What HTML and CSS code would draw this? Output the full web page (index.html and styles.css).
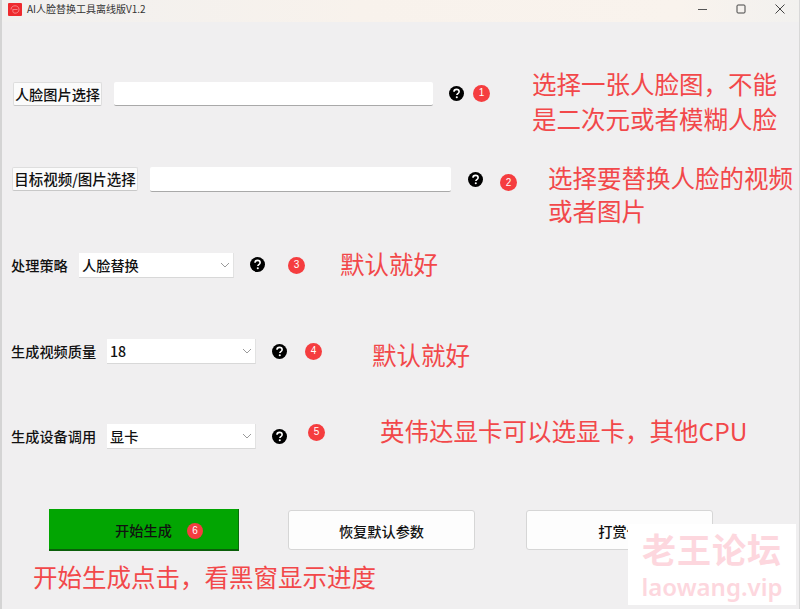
FILE: index.html
```html
<!DOCTYPE html>
<html lang="zh">
<head>
<meta charset="utf-8">
<title>AI人脸替换工具离线版V1.2</title>
<link rel="stylesheet" href="styles.css">
</head>
<body>
<svg class="defs" width="0" height="0" aria-hidden="true">
  <symbol id="help" viewBox="0 0 16 16">
    <circle cx="8" cy="8" r="8" fill="#000"/>
    <path d="M5.3 6.2C5.3 4.6 6.5 3.6 8 3.6s2.8 1 2.8 2.4c0 1.1-.7 1.6-1.4 2.1-.7.5-1 .8-1 1.6" fill="none" stroke="#fff" stroke-width="1.7"/>
    <circle cx="8.3" cy="12" r="1.1" fill="#fff"/>
  </symbol>
  <symbol id="chev" viewBox="0 0 10 6">
    <path d="M1 1l4 4 4-4" fill="none" stroke="#9a9a9a" stroke-width="1"/>
  </symbol>
</svg>
<div class="window">
  <header class="titlebar">
    <svg class="logo" viewBox="0 0 14 13">
      <rect width="14" height="13" rx="1" fill="#ee2a2e"/>
      <path d="M3 6.5C3 4 5 2.800 7 2.800S11 4 11 6.500 9 10.200 7 10.200 4.500 8.500 5 7" fill="none" stroke="#f9a8ac" stroke-width=".7"/>
      <path d="M4.500 6.500h5" stroke="#f9a8ac" stroke-width=".7"/>
    </svg>
    <span class="title">AI人脸替换工具离线版V1.2</span>
    <div class="controls">
      <svg class="ctl ctl-min" viewBox="0 0 10 10"><path d="M0 5.500h9" stroke="#555" stroke-width="1"/></svg>
      <svg class="ctl ctl-max" viewBox="0 0 10 10"><rect x="1" y="1" width="8" height="8" rx="1" fill="none" stroke="#444" stroke-width="1"/></svg>
      <svg class="ctl ctl-close" viewBox="0 0 10 10"><path d="M.5.5l9 9M9.500.5l-9 9" stroke="#444" stroke-width="1"/></svg>
    </div>
  </header>

  <main class="form">
    <section class="row row-1">
      <button class="pick pick-1">人脸图片选择</button>
      <div class="input input-1"></div>
      <svg class="help help-1"><use href="#help"/></svg>
      <span class="badge badge-1">1</span>
      <p class="note note-1">选择一张人脸图，不能<br>是二次元或者模糊人脸</p>
    </section>

    <section class="row row-2">
      <button class="pick pick-2">目标视频/图片选择</button>
      <div class="input input-2"></div>
      <svg class="help help-2"><use href="#help"/></svg>
      <span class="badge badge-2">2</span>
      <p class="note note-2">选择要替换人脸的视频<br>或者图片</p>
    </section>

    <section class="row row-3">
      <label class="label label-3">处理策略</label>
      <div class="select select-3"><span>人脸替换</span><svg class="chev"><use href="#chev"/></svg></div>
      <svg class="help help-3"><use href="#help"/></svg>
      <span class="badge badge-3">3</span>
      <p class="note note-3">默认就好</p>
    </section>

    <section class="row row-4">
      <label class="label label-4">生成视频质量</label>
      <div class="select select-4"><span>18</span><svg class="chev"><use href="#chev"/></svg></div>
      <svg class="help help-4"><use href="#help"/></svg>
      <span class="badge badge-4">4</span>
      <p class="note note-4">默认就好</p>
    </section>

    <section class="row row-5">
      <label class="label label-4">生成设备调用</label>
      <div class="select select-4"><span>显卡</span><svg class="chev"><use href="#chev"/></svg></div>
      <svg class="help help-4"><use href="#help"/></svg>
      <span class="badge badge-5">5</span>
      <p class="note note-5">英伟达显卡可以选显卡，其他CPU</p>
    </section>

    <section class="actions">
      <button class="action action-start">开始生成<span class="badge badge-6">6</span></button>
      <button class="action action-reset">恢复默认参数</button>
      <button class="action action-tip">打赏作</button>
    </section>
    <p class="note note-6">开始生成点击，看黑窗显示进度</p>
  </main>

  <aside class="watermark">
    <span class="wm-cn">老王论坛</span>
    <span class="wm-en">laowang.vip</span>
  </aside>
</div>
</body>
</html>
```

FILE: styles.css
```css
* { box-sizing: border-box; }
html, body { margin: 0; padding: 0; }
body {
  width: 800px;
  height: 609px;
  overflow: hidden;
  background: #f0eff0;
  font-family: "Noto Sans CJK SC", "Liberation Sans", sans-serif;
}
.defs { position: absolute; }
.window {
  position: relative;
  width: 800px;
  height: 609px;
  border-left: 2px solid #d4d4d4;
  border-right: 1px solid #d8d8d8;
}
.titlebar {
  display: flex;
  align-items: center;
  height: 22px;
  padding-left: 6px;
  background: linear-gradient(90deg, #f1f0ef 0, #f8f2ec 45%, #f9f3ed 85%, #f2f1ef 100%);
}
.logo { width: 14px; height: 13px; margin-top: -4px; }
.title {
  margin-left: 5px;
  margin-top: -4px;
  font-size: 10px;
  line-height: 14px;
  color: #333;
}
.controls { display: flex; align-items: center; margin-left: auto; margin-top: -5px; }
.ctl { width: 10px; height: 10px; }
.ctl-min { margin-right: 28px; }
.ctl-max { margin-right: 29px; }
.ctl-close { margin-right: 14px; }

.form { display: flex; flex-direction: column; }
.row { display: flex; align-items: center; height: 24px; }
.row-1 { margin-top: 60px; padding-left: 11px; }
.row-2 { margin-top: 61px; padding-left: 10px; }
.row-3 { margin-top: 62px; padding-left: 9px; }
.row-4 { margin-top: 62px; padding-left: 9px; }
.row-5 { margin-top: 61px; padding-left: 9px; }

.pick {
  height: 24px;
  padding: 0;
  border: 1px solid #dedede;
  border-bottom-color: #c8c8c8;
  border-radius: 2px;
  background: #fbfbfb;
  color: #111;
  font: 500 14.200px/22px "Noto Sans CJK SC", sans-serif;
  white-space: nowrap;
}
.pick-1 { width: 89px; }
.pick-2 { width: 126px; font-size: 14.500px; }

.input {
  height: 24px;
  background: #fff;
  border-bottom: 1px solid #a9a9a9;
  border-radius: 2px;
}
.input-1 { width: 319px; margin-left: 12px; }
.input-2 { width: 301px; margin-left: 12px; height: 25px; }

.help { width: 15px; height: 15px; flex: none; }
.help-1 { margin-left: 16px; margin-top: -2px; }
.help-2 { margin-left: 17px; margin-top: 0; }
.help-3 { margin-left: 16px; margin-top: -2px; }
.help-4 { margin-left: 16px; }

.badge {
  display: inline-flex;
  align-items: center;
  justify-content: center;
  flex: none;
  width: 17px;
  height: 17px;
  border-radius: 50%;
  background: #f53d3f;
  color: #fff;
  font: 10px/1 "Liberation Sans", sans-serif;
}
.badge-1 { margin-left: 9px; margin-top: -2px; }
.badge-2 { margin-left: 17px; margin-top: 7px; }
.badge-3 { margin-left: 23px; }
.badge-4 { margin-left: 18px; }
.badge-5 { margin-left: 21px; margin-top: -8px; }
.badge-6 {
  position: absolute;
  left: 138px;
  top: 14px;
  width: 16px;
  height: 16px;
}

.note {
  margin: 0;
  color: #f2484a;
  font-size: 24.500px;
  line-height: 32px;
  white-space: nowrap;
}
.note-1 { margin-left: 42px; margin-top: 13px; line-height: 35px; }
.note-2 { margin-left: 31px; margin-top: 30px; line-height: 33px; }
.note-3 { margin-left: 35px; margin-top: -2px; }
.note-4 { margin-left: 50px; margin-top: 8px; }
.note-5 { margin-left: 55px; margin-top: -10px; }
.note-6 { margin: 10px 0 0 31px; }

.label {
  color: #111;
  font-size: 14.200px;
  font-weight: 500;
  line-height: 24px;
  white-space: nowrap;
}
.label-3 { width: 68px; }
.label-4 { width: 96px; }

.select {
  display: flex;
  align-items: center;
  justify-content: space-between;
  height: 25px;
  padding: 0 3px 0 3px;
  background: #fff;
  border-bottom: 1px solid #d8d8d8;
  border-right: 1px solid #e2e2e2;
  color: #111;
  font-size: 14.200px;
  font-weight: 500;
}
.select-3 { width: 155px; }
.select-4 { width: 149px; }
.chev { width: 10px; height: 6px; }

.actions { display: flex; align-items: flex-start; margin-top: 61px; padding-left: 47px; }
.action {
  position: relative;
  height: 40px;
  padding: 1px 0 0;
  border: 1px solid #d6d6d6;
  border-radius: 3px;
  background: #fdfdfd;
  color: #111;
  font: 500 14.200px/20px "Noto Sans CJK SC", sans-serif;
}
.action-start {
  width: 190px;
  height: 42px;
  border: 0;
  border-right: 1px solid #0a6d0a;
  border-bottom: 2px solid #0a5f0a;
  border-radius: 0;
  background: #02a502;
}
.action-reset { width: 187px; margin-left: 49px; margin-top: 1px; }
.action-tip { width: 187px; margin-left: 51px; margin-top: 1px; }

.watermark {
  position: absolute;
  left: 626px;
  top: 524px;
  width: 168px;
  height: 81px;
  display: flex;
  flex-direction: column;
  align-items: center;
  background: #fff;
  color: #fdd7de;
  font-weight: 700;
}
.wm-cn { font-size: 34px; line-height: 44px; margin-top: 3px; letter-spacing: 1px; }
.wm-en { font-family: "Noto Sans", sans-serif; font-size: 24px; line-height: 28px; margin-top: 2px; font-weight: 600; }
```
